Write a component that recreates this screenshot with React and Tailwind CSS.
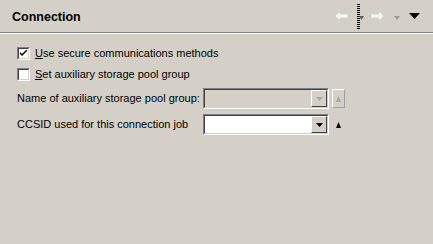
import React from 'react'

const FONT = { fontFamily: '"Liberation Sans", Arial, sans-serif' }

function Checkbox({ checked }) {
  return (
    <span className="w-[13px] h-[13px] shrink-0 border border-t-[#808080] border-l-[#808080] border-b-white border-r-white">
      <span className="flex w-full h-full items-center justify-center bg-white border border-t-[#404040] border-l-[#404040] border-b-[#d4d0c8] border-r-[#d4d0c8]">
        {checked && (
          <svg width="7" height="7" viewBox="0 0 7 7">
            <path d="M0 2 L0 4 L2 6 L7 1 L7 -1 L2 4 Z" fill="#000" />
          </svg>
        )}
      </span>
    </span>
  )
}

function Combo({ disabled }) {
  const arrow = disabled ? '#a8a8a0' : '#000'
  return (
    <div className="flex items-center gap-[3px]">
      <div className="w-[126px] h-[21px] border border-t-[#808080] border-l-[#808080] border-b-white border-r-white">
        <div
          className={`flex h-full border border-t-[#404040] border-l-[#404040] border-b-[#d4d0c8] border-r-[#d4d0c8] ${
            disabled ? 'bg-[#d4d0c8]' : 'bg-white'
          }`}
        >
          <div className="flex-1" />
          <div className="w-[16px] h-full bg-[#d4d0c8] border border-t-white border-l-white border-b-[#404040] border-r-[#404040] flex items-center justify-center">
            <svg width="7" height="4" viewBox="0 0 7 4">
              <path d="M0 0 H7 L3.5 4 Z" fill={arrow} />
            </svg>
          </div>
        </div>
      </div>
      <div
        className={`w-[13px] h-[19px] flex items-center justify-center ${
          disabled ? 'border border-t-white border-l-white border-b-[#a0a0a0] border-r-[#a0a0a0]' : ''
        }`}
      >
        <svg width="5" height="6" viewBox="0 0 5 6">
          <path d="M2.5 0 L5 6 H0 Z" fill={arrow} />
        </svg>
      </div>
    </div>
  )
}

export default function App() {
  return (
    <div className="w-[433px] h-[244px] bg-[#d4d0c8] text-[11px] text-black whitespace-nowrap" style={FONT}>
      {/* header */}
      <div className="h-[32px] flex items-center justify-between pl-[12px] pr-[13px]">
        <span className="text-[12.5px] font-bold pt-[2px]">Connection</span>
        <div className="flex items-center">
          <svg width="14" height="10" viewBox="0 0 14 10" className="mr-[8px]">
            <path d="M0 5 L5 0 V3 H13 V7 H5 V10 Z" fill="#f4f4f0" stroke="#c8c8c0" strokeWidth="0.5" />
          </svg>
          <div className="relative w-[3px] h-[26px] bg-[repeating-linear-gradient(0deg,#000_0_1px,#d4d0c8_1px_2px)]">
            <svg width="5" height="5" viewBox="0 0 5 5" className="absolute left-[2px] top-[13px]">
              <path d="M0 0 H5 L2.5 4 Z" fill="#606060" />
            </svg>
          </div>
          <svg width="14" height="10" viewBox="0 0 14 10" className="ml-[10px] mr-[10px]">
            <path d="M14 5 L9 0 V3 H1 V7 H9 V10 Z" fill="#f4f4f0" stroke="#c8c8c0" strokeWidth="0.5" />
          </svg>
          <svg width="6" height="4" viewBox="0 0 6 4" className="mr-[9px] mt-[4px]">
            <path d="M0 0 H6 L3 4 Z" fill="#9c9c98" />
          </svg>
          <svg width="11" height="6" viewBox="0 0 11 6">
            <path d="M0 0 H11 L5.5 6 Z" fill="#000" />
          </svg>
        </div>
      </div>
      <div className="h-px bg-[#808080]" />
      <div className="h-px bg-white" />

      {/* body */}
      <div className="pl-[17px] pt-[13px] flex flex-col">
        <div className="flex items-center gap-[5px] h-[13px]">
          <Checkbox checked />
          <span>
            <span className="underline">U</span>se secure communications methods
          </span>
        </div>
        <div className="flex items-center gap-[5px] h-[13px] mt-[8px]">
          <Checkbox />
          <span>
            <span className="underline">S</span>et auxiliary storage pool group
          </span>
        </div>
        <div className="flex items-center mt-[7px] h-[21px]">
          <span className="w-[186px]">Name of auxiliary storage pool group:</span>
          <Combo disabled />
        </div>
        <div className="flex items-center mt-[5px] h-[21px]">
          <span className="w-[186px]">CCSID used for this connection job</span>
          <Combo />
        </div>
      </div>
    </div>
  )
}
